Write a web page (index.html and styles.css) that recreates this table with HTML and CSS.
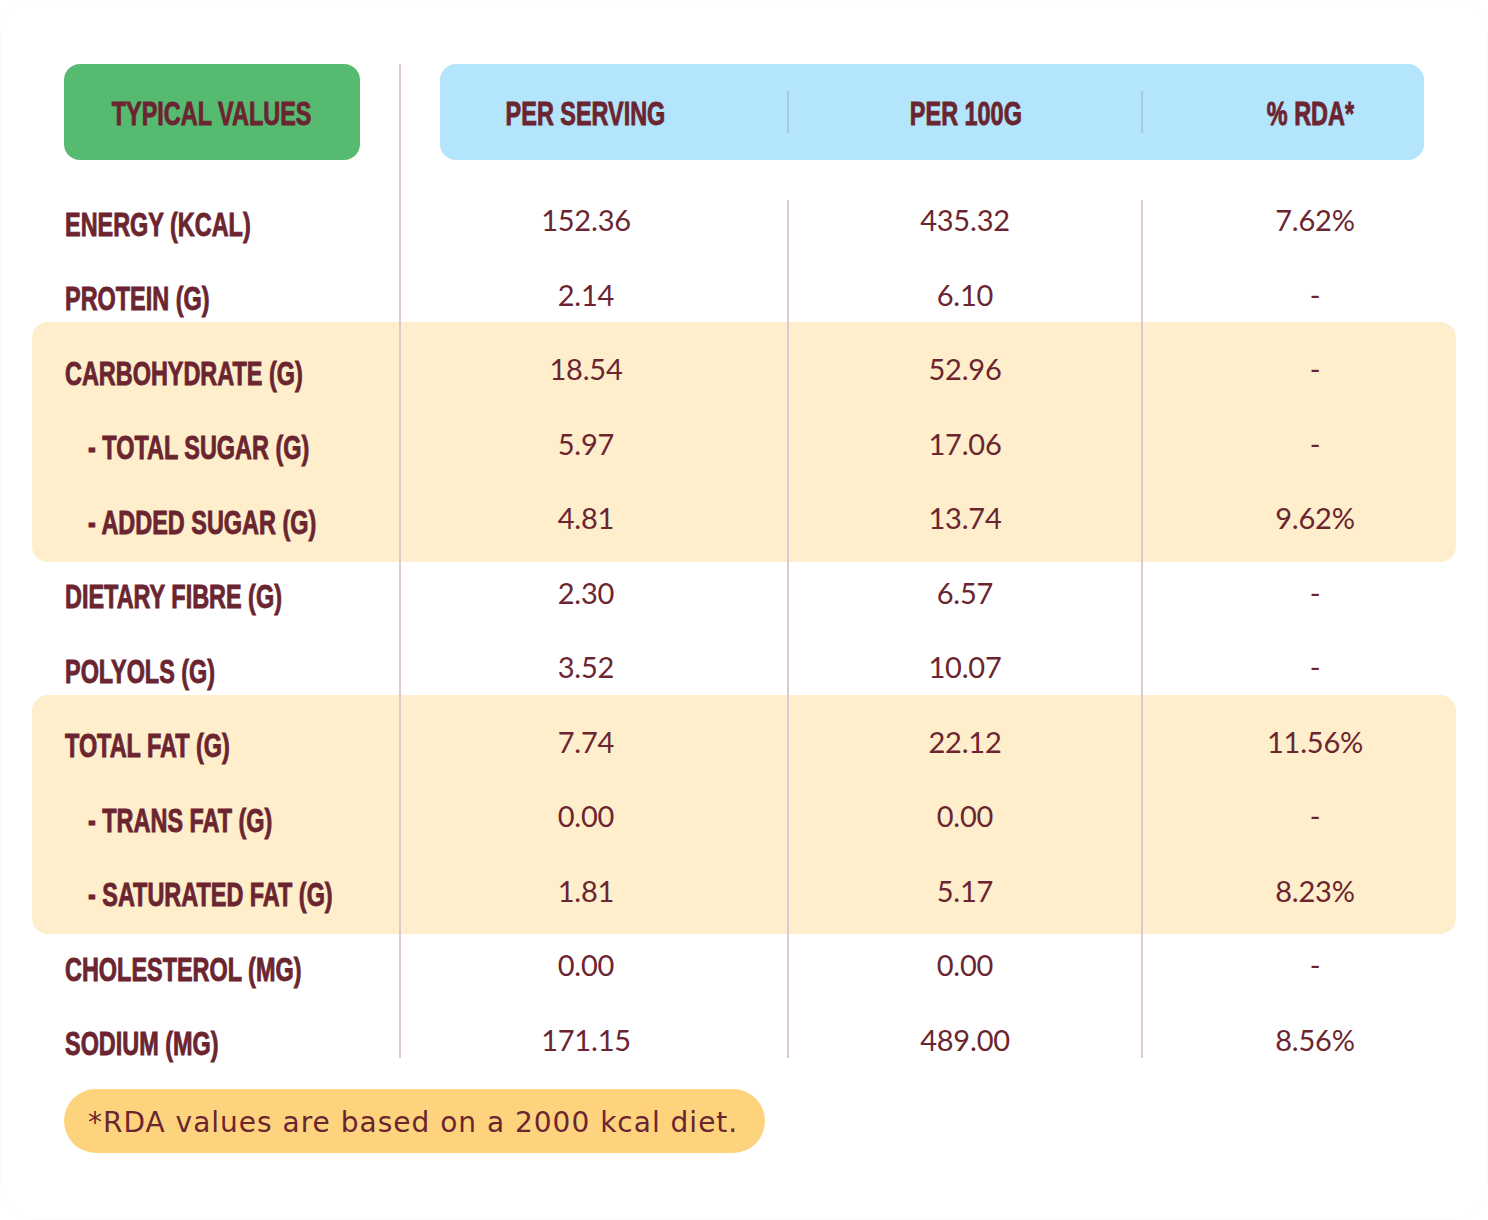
FILE: index.html
```html
<!DOCTYPE html>
<html lang="en">
<head>
<meta charset="utf-8">
<title>Nutrition facts</title>
<link rel="stylesheet" href="styles.css">
</head>
<body>
<div class="card">
  <div class="table">
    <div class="h-typ"><span class="cond">TYPICAL VALUES</span></div>
    <div class="h-vals">
      <div class="hc hc1"><span class="cond">PER SERVING</span></div>
      <div class="hc hc2"><span class="cond">PER 100G</span></div>
      <div class="hc hc3"><span class="cond">% RDA*</span></div>
    </div>

    <div class="group g1"></div>
    <div class="group g2"></div>

    <div class="vline vl0"></div>
    <div class="vline vl1"></div>
    <div class="vline vl2"></div>

    <div class="lab r1"><span class="cond">ENERGY (KCAL)</span></div>
    <div class="v c1 r1">152.36</div><div class="v c2 r1">435.32</div><div class="v c3 r1">7.62%</div>

    <div class="lab r2"><span class="cond">PROTEIN (G)</span></div>
    <div class="v c1 r2">2.14</div><div class="v c2 r2">6.10</div><div class="v c3 r2">-</div>

    <div class="lab r3"><span class="cond">CARBOHYDRATE (G)</span></div>
    <div class="v c1 r3">18.54</div><div class="v c2 r3">52.96</div><div class="v c3 r3">-</div>

    <div class="lab sub r4"><span class="cond">- TOTAL SUGAR (G)</span></div>
    <div class="v c1 r4">5.97</div><div class="v c2 r4">17.06</div><div class="v c3 r4">-</div>

    <div class="lab sub r5"><span class="cond">- ADDED SUGAR (G)</span></div>
    <div class="v c1 r5">4.81</div><div class="v c2 r5">13.74</div><div class="v c3 r5">9.62%</div>

    <div class="lab r6"><span class="cond">DIETARY FIBRE (G)</span></div>
    <div class="v c1 r6">2.30</div><div class="v c2 r6">6.57</div><div class="v c3 r6">-</div>

    <div class="lab r7"><span class="cond">POLYOLS (G)</span></div>
    <div class="v c1 r7">3.52</div><div class="v c2 r7">10.07</div><div class="v c3 r7">-</div>

    <div class="lab r8"><span class="cond">TOTAL FAT (G)</span></div>
    <div class="v c1 r8">7.74</div><div class="v c2 r8">22.12</div><div class="v c3 r8">11.56%</div>

    <div class="lab sub r9"><span class="cond">- TRANS FAT (G)</span></div>
    <div class="v c1 r9">0.00</div><div class="v c2 r9">0.00</div><div class="v c3 r9">-</div>

    <div class="lab sub r10"><span class="cond">- SATURATED FAT (G)</span></div>
    <div class="v c1 r10">1.81</div><div class="v c2 r10">5.17</div><div class="v c3 r10">8.23%</div>

    <div class="lab r11"><span class="cond">CHOLESTEROL (MG)</span></div>
    <div class="v c1 r11">0.00</div><div class="v c2 r11">0.00</div><div class="v c3 r11">-</div>

    <div class="lab r12"><span class="cond">SODIUM (MG)</span></div>
    <div class="v c1 r12">171.15</div><div class="v c2 r12">489.00</div><div class="v c3 r12">8.56%</div>
  </div>
  <div class="note">*RDA values are based on a 2000 kcal diet.</div>
</div>
</body>
</html>
```

FILE: styles.css
```css
html, body {
  margin: 0;
  padding: 0;
  background: #ffffff;
}

.card {
  box-sizing: border-box;
  width: 1488px;
  height: 1220px;
  padding: 64px 64px 0 64px;
  border: 1px solid #fbfbfb;
  border-radius: 34px;
  background: #ffffff;
  color: #6b2530;
  font-family: "Lato", "Liberation Sans", sans-serif;
}

.table {
  display: grid;
  grid-template-columns: 336px 388px 354px 282px;
  grid-template-rows: 96px 21px repeat(12, 74.5px);
  margin-left: -1px;
  margin-top: -1px;
}

.cond {
  display: inline-block;
  font-family: "Liberation Sans", "Arial", sans-serif;
  font-weight: 700;
  font-size: 33px;
  line-height: 1;
  white-space: nowrap;
  transform: scaleX(0.71);
  -webkit-text-stroke: 0.9px currentColor;
}

/* header */
.h-typ {
  grid-column: 1;
  grid-row: 1;
  width: 296px;
  background: #56ba70;
  border-radius: 16px;
  display: flex;
  align-items: center;
  justify-content: center;
  padding-top: 3px;
  box-sizing: border-box;
}
.h-typ .cond { transform-origin: center; }

.h-vals {
  grid-column: 2 / 5;
  grid-row: 1;
  margin-left: 40px;
  background: #b3e6fd;
  border-radius: 16px;
  display: grid;
  grid-template-columns: 348px 354px 282px;
  align-items: center;
}
.hc {
  height: 42px;
  display: flex;
  align-items: center;
  justify-content: center;
  box-sizing: border-box;
  padding-top: 3px;
}
.hc .cond { transform-origin: center; }
.hc1 { padding-right: 57px; }
.hc2 { border-left: 2px solid #a9cbd9; margin-left: -1px; }
.hc3 { border-left: 2px solid #a9cbd9; margin-left: -1px; padding-left: 54px; }

/* highlight groups */
.group {
  grid-column: 1 / 5;
  background: #feeecb;
  border-radius: 16px;
  margin: -8px -32px;
}
.g1 { grid-row: 5 / 8; }
.g2 { grid-row: 10 / 13; }

/* vertical lines */
.vline {
  width: 2px;
  background: #dccacd;
  justify-self: end;
  margin-right: -1px;
}
.vl0 { grid-column: 1; grid-row: 1 / 15; margin-bottom: 17px; }
.vl1 { grid-column: 2; grid-row: 3 / 15; margin-top: 19px; margin-bottom: 17px; }
.vl2 { grid-column: 3; grid-row: 3 / 15; margin-top: 19px; margin-bottom: 17px; }

/* labels */
.lab {
  grid-column: 1;
  display: flex;
  align-items: center;
  padding-top: 12px;
  padding-left: 1px;
}
.lab .cond { transform-origin: left center; }
.lab.sub { padding-left: 24px; }

/* values */
.v {
  display: flex;
  align-items: center;
  justify-content: center;
  font-size: 29px;
  line-height: 1;
  padding-top: 3px;
  letter-spacing: -0.2px;
}
.c1 { grid-column: 2; padding-right: 16px; }
.c2 { grid-column: 3; }
.c3 { grid-column: 4; padding-left: 64px; }

.r1 { grid-row: 3; }
.r2 { grid-row: 4; }
.r3 { grid-row: 5; }
.r4 { grid-row: 6; }
.r5 { grid-row: 7; }
.r6 { grid-row: 8; }
.r7 { grid-row: 9; }
.r8 { grid-row: 10; }
.r9 { grid-row: 11; }
.r10 { grid-row: 12; }
.r11 { grid-row: 13; }
.r12 { grid-row: 14; }

/* footnote */
.note {
  display: inline-block;
  margin-top: 14px;
  height: 64px;
  box-sizing: border-box;
  padding: 3px 27px 0 24px;
  border-radius: 32px;
  background: #fdd47d;
  font-family: "DejaVu Sans", "Lato", sans-serif;
  font-size: 28px;
  letter-spacing: 1px;
  line-height: 61px;
  white-space: nowrap;
  margin-left: -1px;
}
```
